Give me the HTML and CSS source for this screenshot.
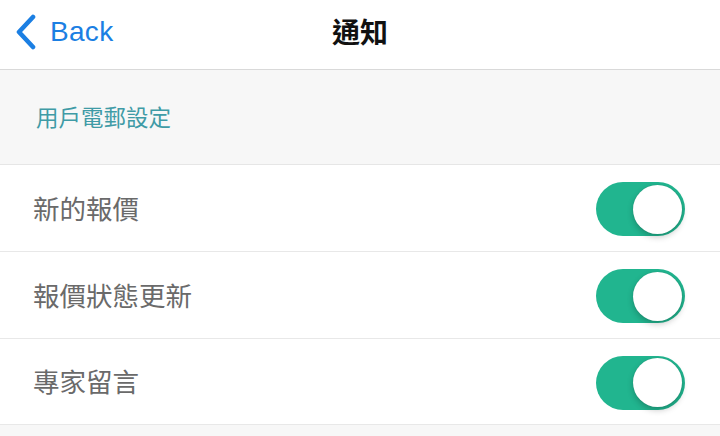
FILE: index.html
```html
<!DOCTYPE html>
<html lang="zh-Hant">
<head>
<meta charset="utf-8">
<link rel="stylesheet" href="styles.css">
</head>
<body>
<div class="page">
  <header class="nav">
    <a class="back">
      <svg class="chev" width="24" height="36" viewBox="0 0 24 36"><polyline points="19,3 5,18 19,33" fill="none" stroke="#1b7fe3" stroke-width="4.6" stroke-linecap="round" stroke-linejoin="round"/></svg>
      <span class="back-text">Back</span>
    </a>
    <h1 class="title">通知</h1>
  </header>
  <div class="section-head">用戶電郵設定</div>
  <ul class="list">
    <li class="row"><span class="label">新的報價</span><span class="toggle on"><span class="knob"></span></span></li>
    <li class="row"><span class="label">報價狀態更新</span><span class="toggle on"><span class="knob"></span></span></li>
    <li class="row last"><span class="label">專家留言</span><span class="toggle on"><span class="knob"></span></span></li>
  </ul>
  <div class="footer-fill"></div>
</div>
</body>
</html>
```
FILE: styles.css
```css
* { box-sizing: border-box; }
html, body { margin: 0; padding: 0; }
body {
  width: 720px;
  height: 436px;
  overflow: hidden;
  background: #f7f7f7;
  font-family: "Noto Sans CJK TC", "Noto Sans", sans-serif;
}
.page { display: flex; flex-direction: column; height: 436px; }
.nav {
  height: 70px;
  background: #fff;
  border-bottom: 1px solid #d9d9d9;
  position: relative;
  display: flex;
  align-items: center;
  justify-content: center;
  flex-shrink: 0;
}
.back {
  position: absolute;
  left: 14px;
  top: 14px;
  display: flex;
  align-items: center;
  gap: 12px;
  color: #1b7fe3;
}
.back-text {
  font-family: "Liberation Sans", Arial, sans-serif;
  font-size: 28px;
  line-height: 36px;
  letter-spacing: 0.3px;
}
.title {
  margin: 0;
  font-size: 28px;
  font-weight: 700;
  color: #111;
  line-height: 36px;
  margin-top: -8px;
}
.section-head {
  height: 95px;
  background: #f7f7f7;
  border-bottom: 1px solid #e6e6e6;
  display: flex;
  align-items: center;
  padding-left: 36px;
  padding-bottom: 2px;
  font-size: 22.5px;
  color: #3f9ba6;
  flex-shrink: 0;
}
.list { list-style: none; margin: 0; padding: 0; background: #fff; }
.row {
  height: 87px;
  display: flex;
  align-items: center;
  justify-content: space-between;
  padding: 0 35px 0 33px;
  border-bottom: 1px solid #e8e8e8;
}
.row.last { height: 86px; }
.label {
  font-size: 26.5px;
  color: #6a6a6a;
  padding-bottom: 2px;
}
.toggle {
  width: 89px;
  height: 54px;
  border-radius: 27px;
  background: #21b58f;
  display: flex;
  align-items: center;
  justify-content: flex-end;
  padding-right: 3px;
  margin-top: 2px;
}
.knob {
  width: 49px;
  height: 49px;
  border-radius: 50%;
  background: #fff;
  box-shadow: 0 3px 6px rgba(0,0,0,0.22), 0 0 1px rgba(0,0,0,0.2);
}
.footer-fill { flex: 1; background: #f7f7f7; }
```
